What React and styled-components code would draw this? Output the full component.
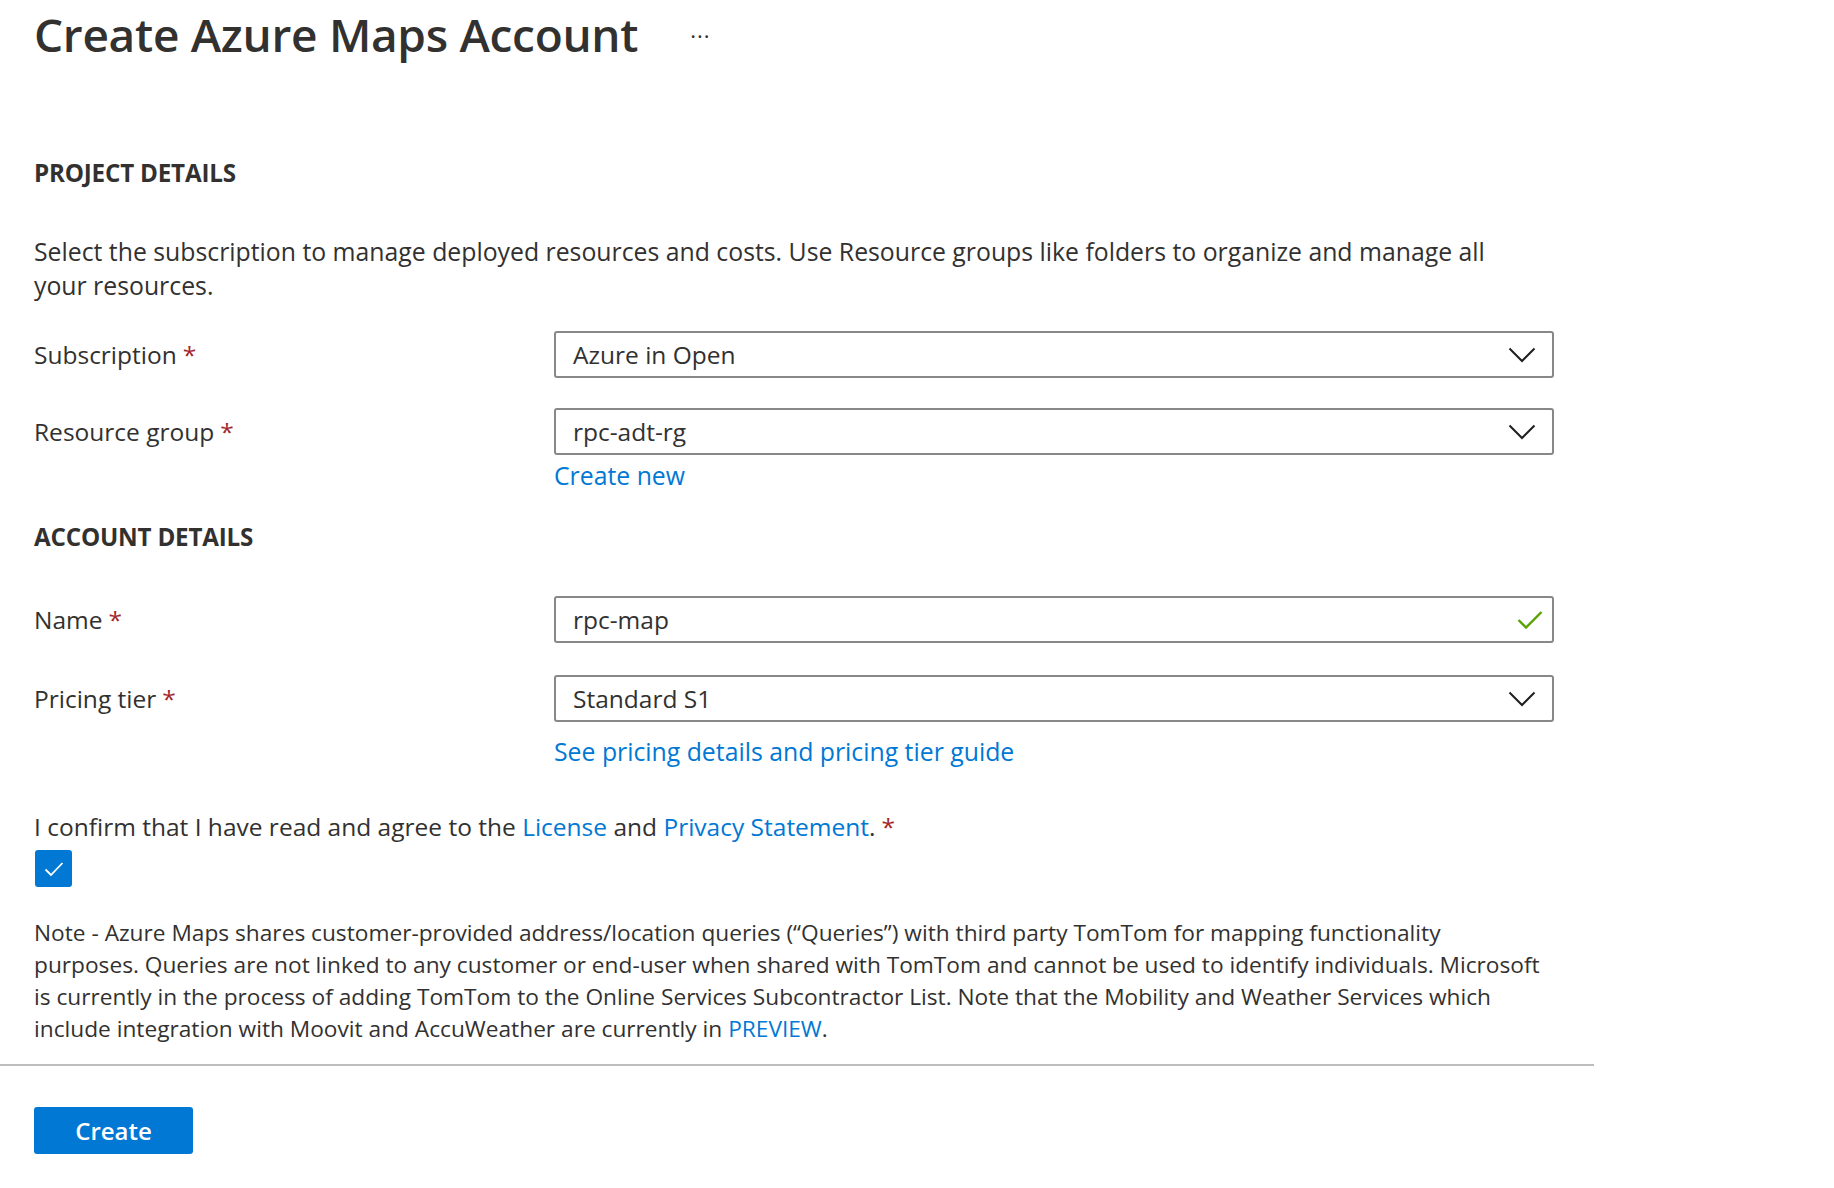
import React from "react";
import styled, { createGlobalStyle } from "styled-components";

const GlobalStyle = createGlobalStyle`
  body {
    margin: 0;
    background: #ffffff;
    font-family: "Open Sans", "Noto Sans", sans-serif;
    color: #323130;
  }
`;

const Page = styled.div`
  width: 1594px;
  padding-top: 4px;
`;

const Content = styled.div`
  padding: 0 34px;
`;

const TitleBar = styled.div`
  display: flex;
  align-items: center;
  gap: 52px;
  height: 60px;
`;

const Title = styled.h1`
  margin: 0;
  font-size: 46px;
  font-weight: 600;
  line-height: 60px;
  letter-spacing: -0.3px;
  color: #323130;
`;

const More = styled.span`
  font-size: 22px;
  letter-spacing: 1px;
  color: #323130;
  margin-top: 2px;
`;

const SectionTitle = styled.h2`
  margin: ${(p) => p.$top}px 0 0;
  font-size: 24.2px;
  font-weight: 700;
  line-height: 30px;
  letter-spacing: -0.2px;
  color: #323130;
`;

const Description = styled.p`
  margin: 46px 0 0;
  max-width: 1490px;
  font-size: 24.8px;
  line-height: 34px;
`;

const FieldRow = styled.div`
  display: grid;
  grid-template-columns: 520px 1000px;
  align-items: start;
  margin-top: ${(p) => p.$top}px;
`;

const Label = styled.div`
  font-size: 24.5px;
  line-height: 47px;
`;

const Required = styled.span`
  color: #a4262c;
  margin-left: 6px;
`;

const Control = styled.div`
  display: flex;
  flex-direction: column;
`;

const Box = styled.div`
  box-sizing: border-box;
  height: 47px;
  display: flex;
  align-items: center;
  justify-content: space-between;
  padding: 0 16px 0 17px;
  border: 2px solid #8a8886;
  border-radius: 3px;
  font-size: 24.5px;
  color: #323130;
`;

const Link = styled.a`
  color: #0078d4;
  text-decoration: none;
  cursor: pointer;
`;

const HelpLink = styled(Link)`
  margin-top: ${(p) => p.$top}px;
  font-size: 24.8px;
  line-height: 30px;
`;

const Confirm = styled.div`
  margin-top: 44px;
  font-size: 24.5px;
  line-height: 34px;
`;

const CheckBox = styled.div`
  margin: 6px 0 0 1px;
  width: 37px;
  height: 37px;
  border-radius: 3px;
  background: #0078d4;
  display: flex;
  align-items: center;
  justify-content: center;
`;

const Note = styled.p`
  margin: 30px 0 0;
  max-width: 1560px;
  font-size: 22.7px;
  line-height: 32px;
`;

const Footer = styled.div`
  margin-top: 19px;
  border-top: 2px solid #bdbdbd;
  padding: 41px 34px 0;
`;

const PrimaryButton = styled.button`
  width: 159px;
  height: 47px;
  border: none;
  border-radius: 3px;
  background: #0078d4;
  color: #ffffff;
  font-family: "Open Sans", "Noto Sans", sans-serif;
  font-size: 24px;
  font-weight: 600;
  cursor: pointer;
`;

const GreenMark = styled.svg`
  margin-right: -7px;
`;

const Chevron = () => (
  <svg width="28" height="16" viewBox="0 0 28 16" fill="none">
    <path d="M1.5 1.5 L14 14 L26.5 1.5" stroke="#201f1e" strokeWidth="2" />
  </svg>
);

const GreenCheck = () => (
  <GreenMark width="26" height="20" viewBox="0 0 26 20" fill="none">
    <path d="M1.5 10 L9 17.5 L24.5 2" stroke="#57a300" strokeWidth="2.4" />
  </GreenMark>
);

const WhiteCheck = () => (
  <svg width="20" height="16" viewBox="0 0 20 16" fill="none">
    <path d="M1.5 8.5 L7 14 L18.5 2" stroke="#ffffff" strokeWidth="1.8" />
  </svg>
);

function Field({ label, value, top, icon, children }) {
  return (
    <FieldRow $top={top}>
      <Label>
        {label}
        <Required>*</Required>
      </Label>
      <Control>
        <Box>
          <span>{value}</span>
          {icon}
        </Box>
        {children}
      </Control>
    </FieldRow>
  );
}

export default function App() {
  return (
    <Page>
      <GlobalStyle />
      <Content>
        <TitleBar>
          <Title>Create Azure Maps Account</Title>
          <More>···</More>
        </TitleBar>

        <SectionTitle $top={94}>PROJECT DETAILS</SectionTitle>
        <Description>
          Select the subscription to manage deployed resources and costs. Use Resource groups like
          folders to organize and manage all your resources.
        </Description>

        <Field label="Subscription" value="Azure in Open" top={29} icon={<Chevron />} />
        <Field label="Resource group" value="rpc-adt-rg" top={30} icon={<Chevron />}>
          <HelpLink $top={5}>Create new</HelpLink>
        </Field>

        <SectionTitle $top={32}>ACCOUNT DETAILS</SectionTitle>

        <Field label="Name" value="rpc-map" top={44} icon={<GreenCheck />} />
        <Field label="Pricing tier" value="Standard S1" top={32} icon={<Chevron />}>
          <HelpLink $top={14}>See pricing details and pricing tier guide</HelpLink>
        </Field>

        <Confirm>
          I confirm that I have read and agree to the <Link>License</Link> and{" "}
          <Link>Privacy Statement</Link>.<Required>*</Required>
        </Confirm>
        <CheckBox>
          <WhiteCheck />
        </CheckBox>

        <Note>
          Note - Azure Maps shares customer-provided address/location queries (“Queries”) with third
          party TomTom for mapping functionality
          <br />
          purposes. Queries are not linked to any customer or end-user when shared with TomTom and
          cannot be used to identify individuals. Microsoft
          <br />
          is currently in the process of adding TomTom to the Online Services Subcontractor List.
          Note that the Mobility and Weather Services which
          <br />
          include integration with Moovit and AccuWeather are currently in <Link>PREVIEW</Link>.
        </Note>
      </Content>
      <Footer>
        <PrimaryButton>Create</PrimaryButton>
      </Footer>
    </Page>
  );
}
